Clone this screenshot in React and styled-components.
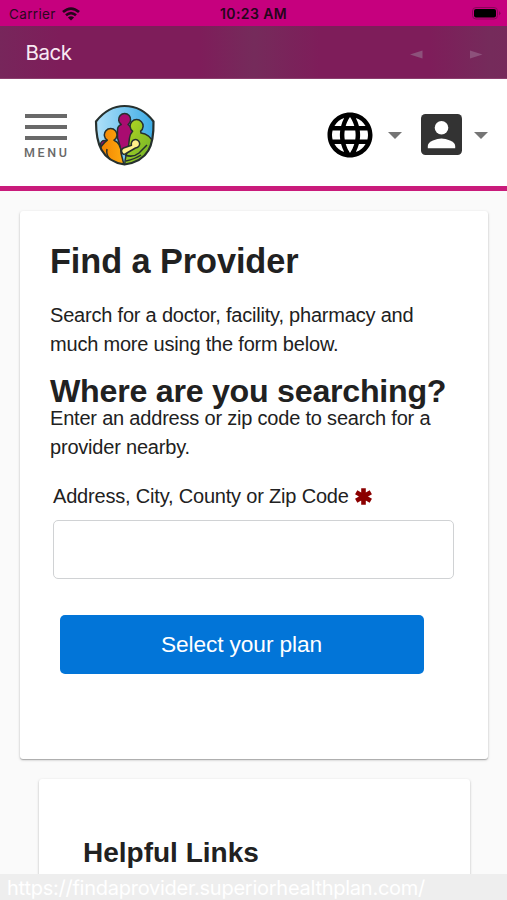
import React from "react";
import styled, { createGlobalStyle } from "styled-components";
import { MdLanguage } from "react-icons/md";

const Global = createGlobalStyle`
  * { box-sizing: border-box; }
  body { margin: 0; background: #fafafa; }
  h1, h2, p { margin: 0; }
  svg { display: block; flex: none; }
`;

const Screen = styled.div`
  width: 507px;
  height: 900px;
  overflow: hidden;
  display: flex;
  flex-direction: column;
  background: #fafafa;
  color: #212121;
  font-family: "Liberation Sans", Arial, sans-serif;
`;

const StatusBar = styled.div`
  flex: none;
  height: 26px;
  padding: 1px 6px 0 9px;
  display: grid;
  grid-template-columns: 1fr auto 1fr;
  align-items: center;
  background: #c6007e;
  color: #2b0820;
  font: 400 13.5px Inter, sans-serif;
`;

const Carrier = styled.div`
  display: flex;
  align-items: center;
  gap: 6px;
  letter-spacing: 0.35px;
`;

const Clock = styled.div`
  color: #25051a;
  font-size: 14px;
  font-weight: 600;
  letter-spacing: 0.4px;
  margin-left: -3px;
`;

const Battery = styled.div`
  justify-self: end;
`;

const NavBar = styled.div`
  flex: none;
  height: 53px;
  padding: 0 24px 0 25.5px;
  display: flex;
  align-items: center;
  background: linear-gradient(90deg, #77265b 0, #7e1d5a 60px, #7e1d5a 200px, #752b5b 254px, #7e1d5a 320px, #7e1d5a 430px, #752b5b 490px, #762a5b 100%);
  border-bottom: 1px solid #8b3e6e;
`;

const BackLink = styled.div`
  flex: 1;
  color: #f8e9f3;
  font: 400 20.5px Inter, sans-serif;
  letter-spacing: -0.5px;
`;

const Arrows = styled.div`
  display: flex;
  gap: 47px;
  padding-top: 4px;
`;

const Header = styled.header`
  flex: none;
  height: 112px;
  padding: 4px 19px 0 25px;
  display: flex;
  align-items: center;
  background: #fff;
  border-bottom: 5px solid #c91b7b;
`;

const Menu = styled.div`
  width: 43px;
  padding-top: 4px;
  display: flex;
  flex-direction: column;
  gap: 7px;
`;

const MenuBar = styled.span`
  width: 42px;
  height: 4px;
  background: #696969;
`;

const MenuLabel = styled.span`
  color: #696969;
  font: 500 12.5px/13px Roboto, sans-serif;
  letter-spacing: 2.6px;
  margin: -1px 0 0 -1px;
`;

const Logo = styled.div`
  margin-left: 26px;
`;

const HeaderActions = styled.div`
  margin-left: auto;
  display: flex;
  align-items: center;
`;

const Caret = styled.span`
  width: 0;
  height: 0;
  margin: 2px ${(p) => p.$after || 0}px 0 ${(p) => p.$before}px;
  border: 7px solid transparent;
  border-top-color: #757575;
  border-bottom-width: 0;
`;

const Page = styled.main`
  flex: 1;
  min-height: 0;
  overflow: hidden;
  padding: 20px 19.5px 0 20px;
`;

const Card = styled.section`
  background: #fff;
  border-radius: 3px;
  box-shadow: 0 1px 3px rgba(0, 0, 0, 0.2), 0 1px 1px rgba(0, 0, 0, 0.22);
`;

const SearchCard = styled(Card)`
  height: 548px;
  padding: 28px 34px 0 30px;
`;

const LinksCard = styled(Card)`
  height: 140px;
  margin: 20px 18px 0 19px;
  padding: 56px 44px 0;
`;

const Title = styled.h1`
  font-size: 34.3px;
  line-height: 44px;
  letter-spacing: -0.08px;
`;

const Subtitle = styled.h2`
  margin-top: 12px;
  font-size: 32.2px;
  line-height: 38px;
  letter-spacing: -0.26px;
  white-space: nowrap;
`;

const LinksTitle = styled.h2`
  font-size: 28px;
  line-height: 36px;
`;

const Copy = styled.p`
  margin-top: ${(p) => p.$top}px;
  font-size: 20px;
  line-height: 29.4px;
  letter-spacing: -0.2px;
  white-space: nowrap;
`;

const Field = styled.label`
  display: block;
  margin: 20px 0 0 3px;
`;

const FieldLabel = styled.span`
  display: flex;
  align-items: center;
  gap: 6px;
  height: 28px;
  font-size: 20px;
  letter-spacing: -0.19px;
  white-space: nowrap;
`;

const Input = styled.input`
  display: block;
  width: 401px;
  height: 59px;
  margin-top: 9px;
  border: 1px solid #d0d2d4;
  border-radius: 5px;
  background: #fff;
  outline: none;
`;

const PlanButton = styled.button`
  display: block;
  width: 364px;
  height: 59px;
  margin: 36px 0 0 9.5px;
  padding: 0;
  border: 0;
  border-radius: 5px;
  background: #0275d8;
  color: #fff;
  font: 400 22.7px "Liberation Sans", Arial, sans-serif;
  letter-spacing: -0.1px;
`;

const UrlBar = styled.footer`
  flex: none;
  height: 26px;
  padding-left: 7px;
  background: #eeeeee;
  color: #fff;
  font: 400 20px/28px Inter, sans-serif;
  letter-spacing: -0.25px;
  white-space: nowrap;
`;

function WifiIcon() {
  return (
    <svg width="18" height="14" viewBox="0 0 18 14" fill="none" stroke="#25051a" strokeWidth="2.7">
      <path d="M1 5.1Q9-2 17 5.1M4 8.3Q9 4 14 8.3" />
      <path d="M9 13.5 5.9 10.4Q9 7.9 12.1 10.4Z" fill="#25051a" stroke="none" />
    </svg>
  );
}

function BatteryIcon() {
  return (
    <svg width="29" height="13" viewBox="0 0 29 13">
      <rect x=".5" y=".5" width="25" height="11.5" rx="3.5" fill="none" stroke="#8b0659" />
      <rect x="2" y="2" width="22" height="8.5" rx="2" fill="#000" />
      <path d="M27 4v4.5q3-2.2 0-4.5" fill="#8b0659" />
    </svg>
  );
}

function FamilyLogo() {
  return (
    <svg width="62" height="62" viewBox="9 9 62 62" stroke="#26302e" strokeWidth="1.5" strokeLinejoin="round">
      <defs>
        <linearGradient id="sky" x1="0" x2="1">
          <stop stopColor="#b5e3fa" />
          <stop offset="1" stopColor="#35a8e4" />
        </linearGradient>
        <linearGradient id="leaf" x1="0" x2="1" y1="0" y2="1">
          <stop stopColor="#b5d821" />
          <stop offset="1" stopColor="#67ad2b" />
        </linearGradient>
        <linearGradient id="amber" x1="0" x2="1">
          <stop stopColor="#ef7c00" />
          <stop offset="1" stopColor="#ffad10" />
        </linearGradient>
        <clipPath id="shield">
          <path d="M11 26.5C20 15 29 11 39.5 11S60 15 68.5 26.5C69 50 64 66 39.5 69.5C16 66 11 48 11 26.5Z" />
        </clipPath>
      </defs>
      <g clipPath="url(#shield)">
        <rect x="8" y="8" width="64" height="64" fill="url(#sky)" stroke="none" />
        <path d="M36.3 29.5A6 6 0 1 1 43 29.5L50 36V58H36Q35 49 32.5 43V35Q32.5 31 36.3 29.5Z" fill="#a90c70" />
        <circle cx="19.5" cy="49.5" r="4" fill="#941165" />
        <path d="M12 59Q16 50 22.3 45.2A6.3 6.3 0 1 1 29 45.2Q36 48 36 58L40 74H20Q11 68 12 59Z" fill="url(#amber)" />
        <path d="M22 54Q21 59 24 63" fill="none" />
        <path d="M47.6 36.2A6.5 6.5 0 1 1 55.6 36.2L56 38Q65 39 69 49L68 73H39.5Q40 61 43 55L44.5 43Q45 39 47.6 36.2Z" fill="url(#leaf)" />
        <path d="M40 60Q48 63 54 58L62 50M41 66Q50 64 56 60" fill="none" />
        <path d="M37 57.5Q35.5 54.5 38.5 53L46.5 50.2A4.2 4.2 0 1 1 50.5 53L41 58.5Q38 60.5 37 57.5Z" fill="#fff18b" />
      </g>
      <path d="M11 26.5C20 15 29 11 39.5 11S60 15 68.5 26.5C69 50 64 66 39.5 69.5C16 66 11 48 11 26.5Z" fill="none" strokeWidth="2.2" />
    </svg>
  );
}

function AccountIcon() {
  return (
    <svg width="41" height="41" viewBox="0 0 41 41">
      <rect width="41" height="41" rx="4.5" fill="#333" />
      <circle cx="20.5" cy="13.8" r="6.8" fill="#fff" />
      <path d="M6.8 34.2v-2.3C6.8 27.3 16 24.5 20.5 24.5s13.7 2.8 13.7 7.4v2.3Z" fill="#fff" />
    </svg>
  );
}

function RequiredIcon() {
  return (
    <svg width="17" height="17" viewBox="0 0 17 17" stroke="#8b0000" strokeWidth="4.6">
      <path d="M8.5 .2v16.6M1.2 4.3l14.6 8.4M1.2 12.7l14.6-8.4" />
    </svg>
  );
}

function NavArrow({ d }) {
  return (
    <svg width="13" height="9" viewBox="0 0 13 9" fill="#8d517b">
      <path d={d} />
    </svg>
  );
}

export default function App() {
  return (
    <>
      <Global />
      <Screen>
        <StatusBar>
          <Carrier>Carrier <WifiIcon /></Carrier>
          <Clock>10:23 AM</Clock>
          <Battery><BatteryIcon /></Battery>
        </StatusBar>
        <NavBar>
          <BackLink>Back</BackLink>
          <Arrows>
            <NavArrow d="M0 4.5 12.5.5v8Z" />
            <NavArrow d="M12.5 4.5 0 .5v8Z" />
          </Arrows>
        </NavBar>
        <Header>
          <Menu>
            <MenuBar />
            <MenuBar />
            <MenuBar />
            <MenuLabel>MENU</MenuLabel>
          </Menu>
          <Logo><FamilyLogo /></Logo>
          <HeaderActions>
            <MdLanguage size={54} color="#000" />
            <Caret $before={11} $after={19} />
            <AccountIcon />
            <Caret $before={12} />
          </HeaderActions>
        </Header>
        <Page>
          <SearchCard>
            <Title>Find a Provider</Title>
            <Copy $top={18}>
              Search for a doctor, facility, pharmacy and<br />much more using the form below.
            </Copy>
            <Subtitle>Where are you searching?</Subtitle>
            <Copy $top={-6}>
              Enter an address or zip code to search for a<br />provider nearby.
            </Copy>
            <Field>
              <FieldLabel>Address, City, County or Zip Code <RequiredIcon /></FieldLabel>
              <Input />
            </Field>
            <PlanButton>Select your plan</PlanButton>
          </SearchCard>
          <LinksCard>
            <LinksTitle>Helpful Links</LinksTitle>
          </LinksCard>
        </Page>
        <UrlBar>https://findaprovider.superiorhealthplan.com/</UrlBar>
      </Screen>
    </>
  );
}
